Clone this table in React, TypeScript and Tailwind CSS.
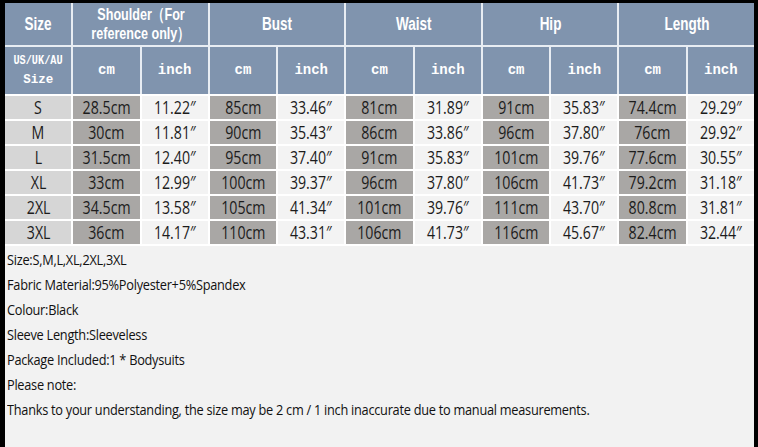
const rows = [
  ["S", "28.5cm", "11.22″", "85cm", "33.46″", "81cm", "31.89″", "91cm", "35.83″", "74.4cm", "29.29″"],
  ["M", "30cm", "11.81″", "90cm", "35.43″", "86cm", "33.86″", "96cm", "37.80″", "76cm", "29.92″"],
  ["L", "31.5cm", "12.40″", "95cm", "37.40″", "91cm", "35.83″", "101cm", "39.76″", "77.6cm", "30.55″"],
  ["XL", "33cm", "12.99″", "100cm", "39.37″", "96cm", "37.80″", "106cm", "41.73″", "79.2cm", "31.18″"],
  ["2XL", "34.5cm", "13.58″", "105cm", "41.34″", "101cm", "39.76″", "111cm", "43.70″", "80.8cm", "31.81″"],
  ["3XL", "36cm", "14.17″", "110cm", "43.31″", "106cm", "41.73″", "116cm", "45.67″", "82.4cm", "32.44″"],
];

const groups = ["Bust", "Waist", "Hip", "Length"];

const notes = [
  "Size:S,M,L,XL,2XL,3XL",
  "Fabric Material:95%Polyester+5%Spandex",
  "Colour:Black",
  "Sleeve Length:Sleeveless",
  "Package Included:1 * Bodysuits",
  "Please note:",
  "Thanks to your understanding, the size may be 2 cm / 1 inch inaccurate due to manual measurements.",
];

const headCell =
  "bg-[#8094ae] text-white font-bold flex items-center justify-center font-['Liberation_Sans',Arial,sans-serif]";
const unitCell =
  "h-[47px] bg-[#8094ae] text-white font-bold flex items-center justify-center font-['Liberation_Mono','DejaVu_Sans_Mono',monospace]";

export default function App() {
  return (
    <div className="w-[758px] h-[447px] bg-black pl-[5px] pt-[3px] pr-[4px] overflow-hidden">
      <div className="h-full bg-[#f2f2f2]">
        <div className="grid grid-cols-11 gap-[2px] bg-[#e8edf3]">
          {/* top header */}
          <div className={`h-[42px] text-[18px] ${headCell}`}>
            <span className="scale-x-[0.75]">Size</span>
          </div>
          <div className={`col-span-2 h-[42px] text-[17px] leading-[19px] flex-col ${headCell}`}>
            <span className="scale-x-[0.74] whitespace-nowrap">Shoulder（For</span>
            <span className="scale-x-[0.74] whitespace-nowrap">reference only）</span>
          </div>
          {groups.map((g) => (
            <div key={g} className={`col-span-2 h-[42px] text-[18px] ${headCell}`}>
              <span className="scale-x-[0.75]">{g}</span>
            </div>
          ))}

          {/* unit header */}
          <div className={`${unitCell} flex-col text-[12.5px] leading-[19px]`}>
            <span className="scale-x-[0.82] whitespace-nowrap">US/UK/AU</span>
            <span>Size</span>
          </div>
          {[0, 1, 2, 3, 4].flatMap((i) => [
            <div key={"cm" + i} className={`${unitCell} text-[14px]`}>
              cm
            </div>,
            <div key={"in" + i} className={`${unitCell} text-[14px]`}>
              inch
            </div>,
          ])}
        </div>

        <div className="grid grid-cols-11 gap-[2px] bg-white py-[2px]">
          {rows.flatMap((r) =>
            r.map((v, j) => (
              <div
                key={r[0] + j}
                className={`h-[23px] flex items-center justify-center text-[17.5px] text-[#1c1c1c] font-['Open_Sans',sans-serif] ${
                  j === 0 ? "bg-[#d6d6d6]" : j % 2 === 1 ? "bg-[#a9a7a5]" : "bg-[#f3f3f3]"
                }`}
              >
                <span className="scale-x-[0.81] whitespace-nowrap">{v}</span>
              </div>
            ))
          )}
        </div>

        <div className="pl-[2px] pt-[1px] font-['Open_Sans',sans-serif]">
          {notes.map((n) => (
            <div key={n} className="h-[25px] flex items-center text-[14.5px] text-[#111]">
              <span className="origin-left scale-x-[0.88] whitespace-nowrap tracking-[-0.3px]">{n}</span>
            </div>
          ))}
        </div>
      </div>
    </div>
  );
}
